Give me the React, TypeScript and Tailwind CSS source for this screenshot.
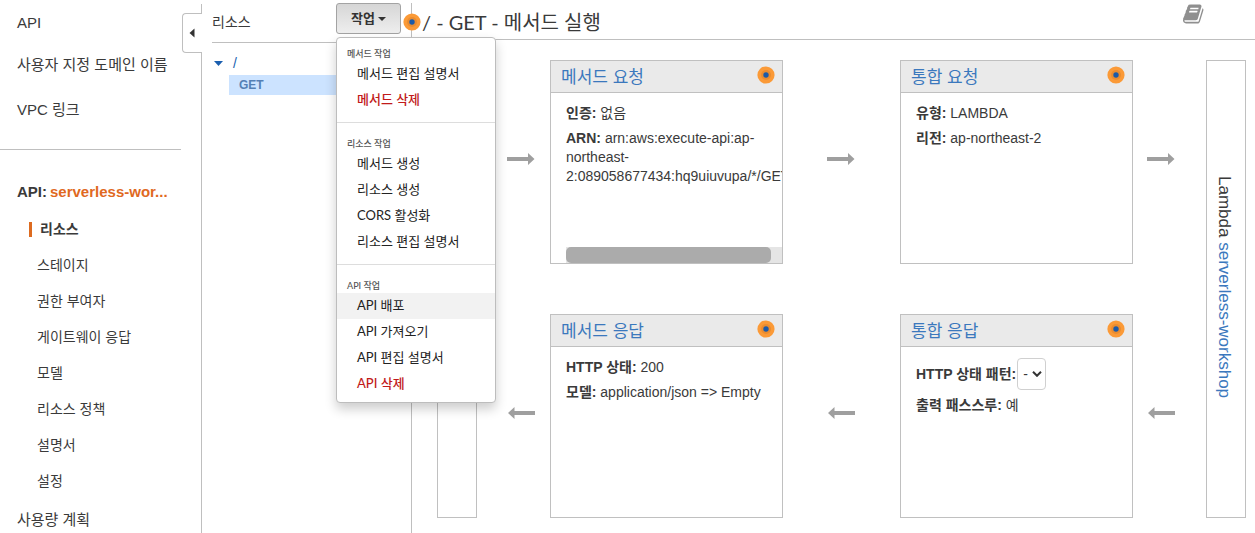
import React from "react";

const resourceNav = [
  "리소스",
  "스테이지",
  "권한 부여자",
  "게이트웨이 응답",
  "모델",
  "리소스 정책",
  "설명서",
  "설정",
];

type MenuEntry = { label: string; danger?: boolean; active?: boolean };

const menuGroups: { title: string; items: MenuEntry[] }[] = [
  {
    title: "메서드 작업",
    items: [{ label: "메서드 편집 설명서" }, { label: "메서드 삭제", danger: true }],
  },
  {
    title: "리소스 작업",
    items: [
      { label: "메서드 생성" },
      { label: "리소스 생성" },
      { label: "CORS 활성화" },
      { label: "리소스 편집 설명서" },
    ],
  },
  {
    title: "API 작업",
    items: [
      { label: "API 배포", active: true },
      { label: "API 가져오기" },
      { label: "API 편집 설명서" },
      { label: "API 삭제", danger: true },
    ],
  },
];

function HintDot() {
  return (
    <svg className="size-[18px] shrink-0" viewBox="0 0 18 18" aria-hidden="true">
      <circle cx="9" cy="9" r="8.6" fill="#fb9a37" />
      <circle cx="9" cy="9" r="5" fill="#ea8c30" />
      <circle cx="9" cy="9" r="2.7" fill="#1c5aa8" />
    </svg>
  );
}

function Arrow({ left = false }: { left?: boolean }) {
  return (
    <svg className="h-3 w-7" viewBox="0 0 28 12" fill="#9f9f9f" aria-hidden="true">
      {left ? <path d="M7.500 0v4H28v4H7.500v4L1 6z" /> : <path d="M21 0v4H0v4h21v4l6.500-6z" />}
    </svg>
  );
}

function BookIcon() {
  return (
    <svg className="size-[22px]" viewBox="0 0 1792 1792" fill="#8f8f8f" aria-hidden="true">
      <path d="M1639 478q40 57 18 129l-275 906q-19 64-76.500 107.500t-122.500 43.500h-923q-77 0-148.500-53.500t-99.500-131.500q-24-67-2-127 0-4 3-27t4-37q1-8-3-21.500t-3-19.500q2-11 8-21t16.500-23.500 16.500-23.500q23-38 45-91.500t30-91.500q3-10 .5-30t-.5-28q3-11 17-28t17-23q21-36 42-92t25-90q1-9-2.500-32t.5-28q4-13 22-30.500t22-22.500q19-26 42.500-84.500t27.500-96.500q1-8-3-25.500t-2-26.500q2-8 9-18t18-23 17-21q8-12 16.500-30.500t15-35 16-36 19.500-32 26.500-23.500 36-11.500 47.500 5.500l-1 3q38-9 51-9h761q74 0 114 56t18 130l-274 906q-36 119-71.500 153.500t-128.500 34.500h-869q-27 0-38 15-11 16-1 43 24 70 144 70h923q29 0 56-15.500t35-41.500l300-987q7-22 5-57 38 15 59 43zm-1064 2q-4 13 2 22.500t20 9.500h608q13 0 25.500-9.500t16.500-22.500l21-64q4-13-2-22.500t-20-9.500h-608q-13 0-25.500 9.500t-16.500 22.500zm-83 256q-4 13 2 22.500t20 9.500h608q13 0 25.500-9.500t16.500-22.500l21-64q4-13-2-22.500t-20-9.500h-608q-13 0-25.500 9.500t-16.500 22.500z" />
    </svg>
  );
}

function Card({ title, children }: { title: string; children: React.ReactNode }) {
  return (
    <section className="flex min-w-0 flex-col border border-[#c0c0c0] bg-white">
      <header className="flex h-8 shrink-0 items-start justify-between border-b border-[#c0c0c0] bg-[#eaeaea] pt-[5px] pr-[7px] pl-2.5">
        <h2 className="text-[17px] leading-6">
          <a href="#" className="text-[#3b78bd]">{title}</a>
        </h2>
        <HintDot />
      </header>
      <div className="flex min-h-0 flex-1 flex-col gap-1.5 overflow-hidden pt-[11px] pl-[15px] text-sm leading-[19px]">
        {children}
      </div>
    </section>
  );
}

function Sidebar() {
  return (
    <aside className="relative w-[202px] shrink-0 pt-1">
      <nav className="h-full border-r border-[#bfbfbf] text-[15px]">
        <a href="#" className="flex h-[39px] items-center pl-[17px]">API</a>
        <a href="#" className="flex h-[45px] items-center pl-[17px]">사용자 지정 도메인 이름</a>
        <a href="#" className="flex h-[45px] items-center pl-[17px]">VPC 링크</a>
        <hr className="mt-4 mr-5 border-[#bfbfbf]" />
        <div className="mt-6 flex h-9 items-center gap-[3px] pl-[17px] font-bold">
          <span>API:</span>
          <a href="#" className="text-[#e0691f]">serverless-wor...</a>
        </div>
        <ul className="mt-px text-sm">
          {resourceNav.map((label, i) => (
            <li key={label} className="flex h-9 items-center">
              {i === 0 ? (
                <a href="#" className="ml-[29px] border-l-3 border-[#dd6b20] pl-2 leading-[15px] font-bold">
                  {label}
                </a>
              ) : (
                <a href="#" className="pl-[37px]">{label}</a>
              )}
            </li>
          ))}
        </ul>
        <a href="#" className="flex h-[42px] items-center pl-[17px]">사용량 계획</a>
      </nav>
      <button
        type="button"
        aria-label="접기"
        className="absolute top-[13px] right-0 flex h-10 w-5 items-center rounded-l border border-r-0 border-[#bfbfbf] bg-white pl-1.5"
      >
        <svg className="h-2.5 w-[6px]" viewBox="0 0 6 10" fill="#333" aria-hidden="true">
          <path d="M5.500 0.500v9L0.500 5z" />
        </svg>
      </button>
    </aside>
  );
}

function ActionMenu() {
  return (
    <div className="relative font-[Lato,'Noto_Sans_CJK_KR',sans-serif]">
      <button
        type="button"
        aria-haspopup="menu"
        aria-expanded="true"
        className="flex h-[31px] w-[65px] items-center justify-center gap-[3px] rounded-[3px] border border-[#a3a3a3] bg-linear-to-b from-[#d6d6d6] to-[#eeeeee] text-[13px] font-bold text-[#333]"
      >
        작업
        <svg className="h-1 w-2" viewBox="0 0 8 4" fill="#333" aria-hidden="true">
          <path d="M0 0h8L4 4z" />
        </svg>
      </button>
      <div
        role="menu"
        className="absolute top-[34px] left-0 z-20 w-40 rounded border border-[#bdbdbd] bg-white py-[5px] text-[#222] shadow-[0_6px_12px_rgba(0,0,0,0.2)]"
      >
        {menuGroups.map((group, g) => (
          <div
            key={group.title}
            role="group"
            aria-label={group.title}
            className={g > 0 ? "mt-[9px] border-t border-[#ddd] pt-2.5" : ""}
          >
            <div className="flex h-[18px] items-center pt-1 pl-2.5 text-[9px] font-medium text-[#555]">{group.title}</div>
            {group.items.map((item) => (
              <button
                key={item.label}
                type="button"
                role="menuitem"
                className={`flex h-[26px] w-full items-center pl-5 text-[13px] ${item.active ? "bg-[#f2f2f2]" : ""} ${
                  item.danger ? "font-medium text-[#c11a1a]" : ""
                }`}
              >
                {item.label}
              </button>
            ))}
          </div>
        ))}
      </div>
    </div>
  );
}

function ResourceTree() {
  return (
    <div className="w-[210px] shrink-0 pt-[3px]">
      <div className="h-full border-r border-[#bfbfbf]">
        <div className="ml-2.5 flex h-10 items-start justify-between border-b border-[#bfbfbf] pr-2.5">
          <h2 className="text-sm leading-[38px]">리소스</h2>
          <ActionMenu />
        </div>
        <div className="flex h-8 items-center gap-2 pt-2 pl-3">
          <svg className="h-[5px] w-[9px]" viewBox="0 0 9 5" fill="#1b5faf" aria-hidden="true">
            <path d="M0 0h9L4.500 5z" />
          </svg>
          <a href="#" className="pl-0.5 text-sm text-[#1b5faf]">/</a>
        </div>
        <a href="#" className="ml-[27px] flex h-5 items-center bg-[#cce3ff] pl-2.5 text-xs font-bold text-[#5580b5]">
          GET
        </a>
      </div>
    </div>
  );
}

export default function App() {
  return (
    <div className="flex h-screen overflow-hidden bg-white font-['Liberation_Sans','Noto_Sans_CJK_KR',sans-serif] text-[#3a3a3a]">
      <Sidebar />
      <ResourceTree />
      <main className="min-w-0 flex-1">
        <header className="flex h-10 items-center justify-between border-b border-[#bfbfbf] pt-1 pr-[50px]">
          <div className="relative z-10 -ml-[9px] flex items-center">
            <HintDot />
            <h1 className="pl-px font-[Lato,'Noto_Sans_CJK_KR',sans-serif] text-xl leading-8">
              / - GET - 메서드 실행
            </h1>
          </div>
          <a href="#" aria-label="설명서" className="pb-4">
            <BookIcon />
          </a>
        </header>

        <div className="mt-5 mr-[9px] ml-[25px] grid grid-cols-[40px_73px_minmax(0,1fr)_117px_minmax(0,1fr)_73px_40px] grid-rows-[204px_204px] gap-y-[50px]">
          <div className="row-span-2 border border-[#c0c0c0]" />
          <div className="flex items-center pb-1.5 pl-[30px]"><Arrow /></div>
          <Card title="메서드 요청">
            <p><b>인증:</b> 없음</p>
            <p>
              <b>ARN:</b> arn:aws:execute-api:ap-northeast-
              <wbr />
              2:089058677434:hq9uiuvupa/*/GET
            </p>
            <div className="mt-auto h-4 shrink-0 bg-[#e5e5e5]">
              <div className="h-full w-[95%] rounded-[5px] bg-[#ababab]" />
            </div>
          </Card>
          <div className="flex items-center pb-1.5 pl-11"><Arrow /></div>
          <Card title="통합 요청">
            <p><b>유형:</b> LAMBDA</p>
            <p><b>리전:</b> ap-northeast-2</p>
          </Card>
          <div className="flex items-center pb-1.5 pl-3.5"><Arrow /></div>
          <div className="row-span-2 flex items-center justify-center border border-[#c0c0c0] pr-1 pb-1">
            <p className="text-[17px] leading-5 whitespace-nowrap [writing-mode:vertical-rl]">
              Lambda <a href="#" className="text-[#3b78bd]">serverless-workshop</a>
            </p>
          </div>

          <div className="flex items-center pb-1.5 pl-[30px]"><Arrow left /></div>
          <Card title="메서드 응답">
            <p><b>HTTP 상태:</b> 200</p>
            <p><b>모델:</b> application/json =&gt; Empty</p>
          </Card>
          <div className="flex items-center pb-1.5 pl-11"><Arrow left /></div>
          <Card title="통합 응답">
            <div className="flex items-center gap-px">
              <label htmlFor="status-pattern" className="font-bold">HTTP 상태 패턴:</label>
              <span className="relative flex items-center">
                <select
                  id="status-pattern"
                  className="h-8 w-[29px] appearance-none rounded border border-[#d0d0d0] bg-white pl-[5px] text-sm"
                >
                  <option>-</option>
                </select>
                <svg
                  className="pointer-events-none absolute right-1 h-1.5 w-2.5"
                  viewBox="0 0 10 6"
                  fill="none"
                  stroke="#333"
                  strokeWidth="2"
                  aria-hidden="true"
                >
                  <path d="M1 0.800l4 4 4-4" />
                </svg>
              </span>
            </div>
            <p><b>출력 패스스루:</b> 예</p>
          </Card>
          <div className="flex items-center pb-1.5 pl-3.5"><Arrow left /></div>
        </div>
      </main>
    </div>
  );
}
